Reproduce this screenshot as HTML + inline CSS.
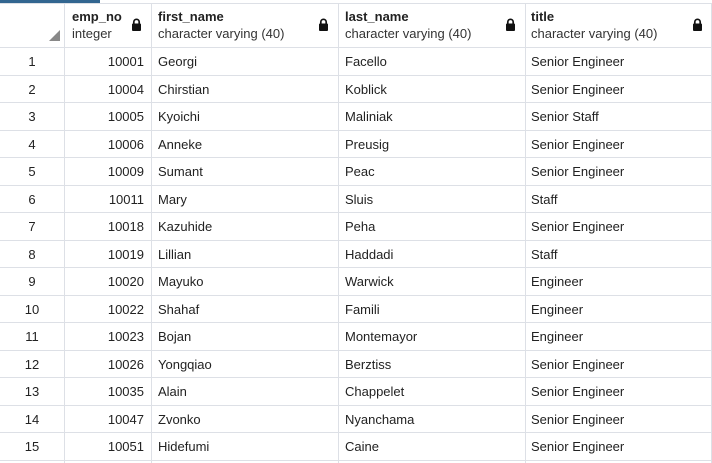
<html><head><style>
body{margin:0;width:712px;height:463px;background:#fff;font-family:"Liberation Sans",sans-serif;color:#222;font-size:13px;position:relative;overflow:hidden}
.bar{position:absolute;left:0;top:0;width:100px;height:3px;background:#326690}
.v{position:absolute;top:3px;bottom:0;width:1px;background:#dde0e6}
.h{position:absolute;left:0;right:0;height:1px;background:#dde0e6}
.t{position:absolute;white-space:nowrap}
.hd{font-weight:bold;font-size:13px;color:#222}
.sub{color:#333}
.lock{position:absolute;top:18px}
</style></head><body>
<div class="bar"></div>
<div class="h" style="top:3px"></div>
<div class="v" style="left:64px"></div><div class="v" style="left:151px"></div><div class="v" style="left:338px"></div><div class="v" style="left:525px"></div><div class="v" style="left:711px"></div>
<svg style="position:absolute;left:49px;top:30px" width="11" height="11"><polygon points="11,0 11,11 0,11" fill="#888"/></svg>
<div class="t hd" style="left:72px;top:9px">emp_no</div><div class="t sub" style="left:72px;top:26px">integer</div>
<div class="t hd" style="left:158px;top:9px">first_name</div><div class="t sub" style="left:158px;top:26px">character varying (40)</div>
<div class="t hd" style="left:345px;top:9px">last_name</div><div class="t sub" style="left:345px;top:26px">character varying (40)</div>
<div class="t hd" style="left:531px;top:9px">title</div><div class="t sub" style="left:531px;top:26px">character varying (40)</div>
<svg class="lock" style="left:131px" width="11" height="13"><path d="M2.8 6V4a2.7 2.7 0 0 1 5.4 0V6" stroke="#111" stroke-width="1.7" fill="none"/><rect x="1" y="5.5" width="9" height="7.5" rx="1" fill="#111"/></svg>
<svg class="lock" style="left:318px" width="11" height="13"><path d="M2.8 6V4a2.7 2.7 0 0 1 5.4 0V6" stroke="#111" stroke-width="1.7" fill="none"/><rect x="1" y="5.5" width="9" height="7.5" rx="1" fill="#111"/></svg>
<svg class="lock" style="left:505px" width="11" height="13"><path d="M2.8 6V4a2.7 2.7 0 0 1 5.4 0V6" stroke="#111" stroke-width="1.7" fill="none"/><rect x="1" y="5.5" width="9" height="7.5" rx="1" fill="#111"/></svg>
<svg class="lock" style="left:692px" width="11" height="13"><path d="M2.8 6V4a2.7 2.7 0 0 1 5.4 0V6" stroke="#111" stroke-width="1.7" fill="none"/><rect x="1" y="5.5" width="9" height="7.5" rx="1" fill="#111"/></svg>
<div id="rows"></div>
<script>
var d=[["10001","Georgi","Facello","Senior Engineer"],["10004","Chirstian","Koblick","Senior Engineer"],["10005","Kyoichi","Maliniak","Senior Staff"],["10006","Anneke","Preusig","Senior Engineer"],["10009","Sumant","Peac","Senior Engineer"],["10011","Mary","Sluis","Staff"],["10018","Kazuhide","Peha","Senior Engineer"],["10019","Lillian","Haddadi","Staff"],["10020","Mayuko","Warwick","Engineer"],["10022","Shahaf","Famili","Engineer"],["10023","Bojan","Montemayor","Engineer"],["10026","Yongqiao","Berztiss","Senior Engineer"],["10035","Alain","Chappelet","Senior Engineer"],["10047","Zvonko","Nyanchama","Senior Engineer"],["10051","Hidefumi","Caine","Senior Engineer"]];
var h="";
for(var i=0;i<=15;i++){h+='<div class="h" style="top:'+Math.round(47+i*27.5)+'px"></div>';}
for(var i=0;i<15;i++){var y=Math.round(47+i*27.5)+7;var r=d[i];
h+='<div class="t" style="left:0;width:64px;text-align:center;top:'+y+'px">'+(i+1)+'</div>';
h+='<div class="t" style="left:64px;width:80px;text-align:right;top:'+y+'px">'+r[0]+'</div>';
h+='<div class="t" style="left:158px;top:'+y+'px">'+r[1]+'</div>';
h+='<div class="t" style="left:345px;top:'+y+'px">'+r[2]+'</div>';
h+='<div class="t" style="left:531px;top:'+y+'px">'+r[3]+'</div>';}
document.getElementById("rows").innerHTML=h;
</script>
</body></html>
